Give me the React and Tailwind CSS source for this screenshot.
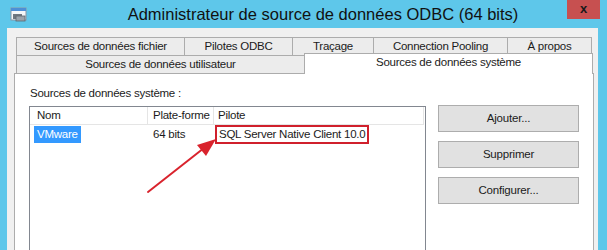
import React from "react";

const tabsTop = [
  { label: "Sources de données fichier", w: "w-[169px]" },
  { label: "Pilotes ODBC", w: "w-[108px]" },
  { label: "Traçage", w: "w-[81px]" },
  { label: "Connection Pooling", w: "w-[134px]" },
  { label: "À propos", w: "w-[84px]" },
];

const AppIcon = () => (
  <svg width="18" height="16" viewBox="0 0 18 16">
    <rect x="1" y="1" width="15" height="12" fill="#f4f6f8" stroke="#8a95a3" />
    <rect x="1" y="1" width="15" height="3" fill="#4d8fd6" />
    <rect x="3" y="7" width="9" height="5" fill="#6f7780" />
    <rect x="6" y="9" width="9" height="5" fill="#9aa2aa" stroke="#5f666e" strokeWidth="0.8" />
  </svg>
);

const Button = ({ children }) => (
  <div className="h-[27px] w-[141px] flex items-center justify-center bg-[#e1e1e1] border border-[#adadad] text-[11.5px] tracking-[-0.2px] text-[#1b1b1b]">
    {children}
  </div>
);

export default function App() {
  return (
    <div
      className="relative w-[607px] h-[250px] overflow-hidden bg-[#5ec7ea] flex flex-col"
      style={{ fontFamily: '"Liberation Sans", Arial, sans-serif' }}
    >
      {/* title bar */}
      <div className="h-[28px] flex items-center shrink-0">
        <div className="w-[38px] pl-[10px] pt-[1px]">
          <AppIcon />
        </div>
        <div className="flex-1 text-center text-[16.5px] text-[#111] pl-[41px] whitespace-nowrap">
          Administrateur de source de données ODBC (64 bits)
        </div>
        <div className="w-[40px] h-[28px] flex items-start">
          <div className="w-[33px] h-[19px] bg-[#c75050] flex items-center justify-center text-[13px] font-bold text-[#1a1a1a] leading-none pb-[2px]">
            x
          </div>
        </div>
      </div>

      {/* client area */}
      <div className="ml-[7px] w-[591px] flex-1 bg-[#f0f0f0] pl-[7px] pt-[9px] text-[11.5px] tracking-[-0.25px] text-[#1b1b1b] whitespace-nowrap">
        <div className="w-[580px]">
          {/* tabs */}
          <div className="pl-[2px]">
            <div className="flex h-[18px]">
              {tabsTop.map((t, i) => (
                <div
                  key={t.label}
                  className={`${t.w} h-[18px] flex items-center justify-center bg-[#ececec] border-t border-r border-[#acacac] ${i === 0 ? "border-l" : ""}`}
                >
                  {t.label}
                </div>
              ))}
            </div>
            <div className="flex h-[18px] items-end">
              <div className="w-[288px] h-[18px] flex items-center justify-center bg-[#ececec] border-t border-l border-[#acacac]">
                Sources de données utilisateur
              </div>
              <div className="relative w-[289px] h-[21px] -mt-[3px] flex items-center justify-center bg-white border-t border-l border-r border-[#acacac] pb-[3px] z-10 translate-y-[1px]">
                Sources de données système
              </div>
            </div>
          </div>

          {/* panel */}
          <div className="h-[200px] bg-white border-l border-r border-t border-[#acacac] pl-[14px] pt-[11px] flex gap-[12px]">
            <div className="flex flex-col">
              <div className="h-[16px] leading-[16px] pl-[1px]">
                Sources de données système :
              </div>
              <div className="mt-[5px] w-[397px] h-[160px] border border-[#828790] bg-white">
                <div className="flex h-[18px] border-b border-[#e5e5e5] mr-[1px]">
                  <div className="w-[118px] pl-[7px] border-r border-[#e5e5e5] leading-[17px]">Nom</div>
                  <div className="w-[66px] pl-[5px] border-r border-[#e5e5e5] leading-[17px]">Plate-forme</div>
                  <div className="flex-1 pl-[4px] border-r border-[#e5e5e5] leading-[17px]">Pilote</div>
                </div>
                <div className="flex h-[19px]">
                  <div className="w-[118px] pl-[4px] pt-[1px]">
                    <span className="inline-block bg-[#3399ff] text-white px-[3px] h-[17px] leading-[17px]">VMware</span>
                  </div>
                  <div className="w-[66px] pl-[5px] pt-[1px] leading-[17px]">64 bits</div>
                  <div className="pl-[1px]">
                    <div className="inline-block border-2 border-[#d0202c] px-[2px] h-[19px] leading-[15px]">
                      SQL Server Native Client 10.0
                    </div>
                  </div>
                </div>
              </div>
            </div>
            <div className="pt-[20px] flex flex-col gap-[9px]">
              <Button>Ajouter...</Button>
              <Button>Supprimer</Button>
              <Button>Configurer...</Button>
            </div>
          </div>
        </div>
      </div>

      {/* annotation arrow */}
      <svg className="absolute inset-0 pointer-events-none" width="607" height="250">
        <line x1="148" y1="192" x2="204" y2="148" stroke="#d9232d" strokeWidth="2" strokeLinecap="round" />
        <polygon points="216,139 197,145 206,156" fill="#d9232d" />
      </svg>
    </div>
  );
}
